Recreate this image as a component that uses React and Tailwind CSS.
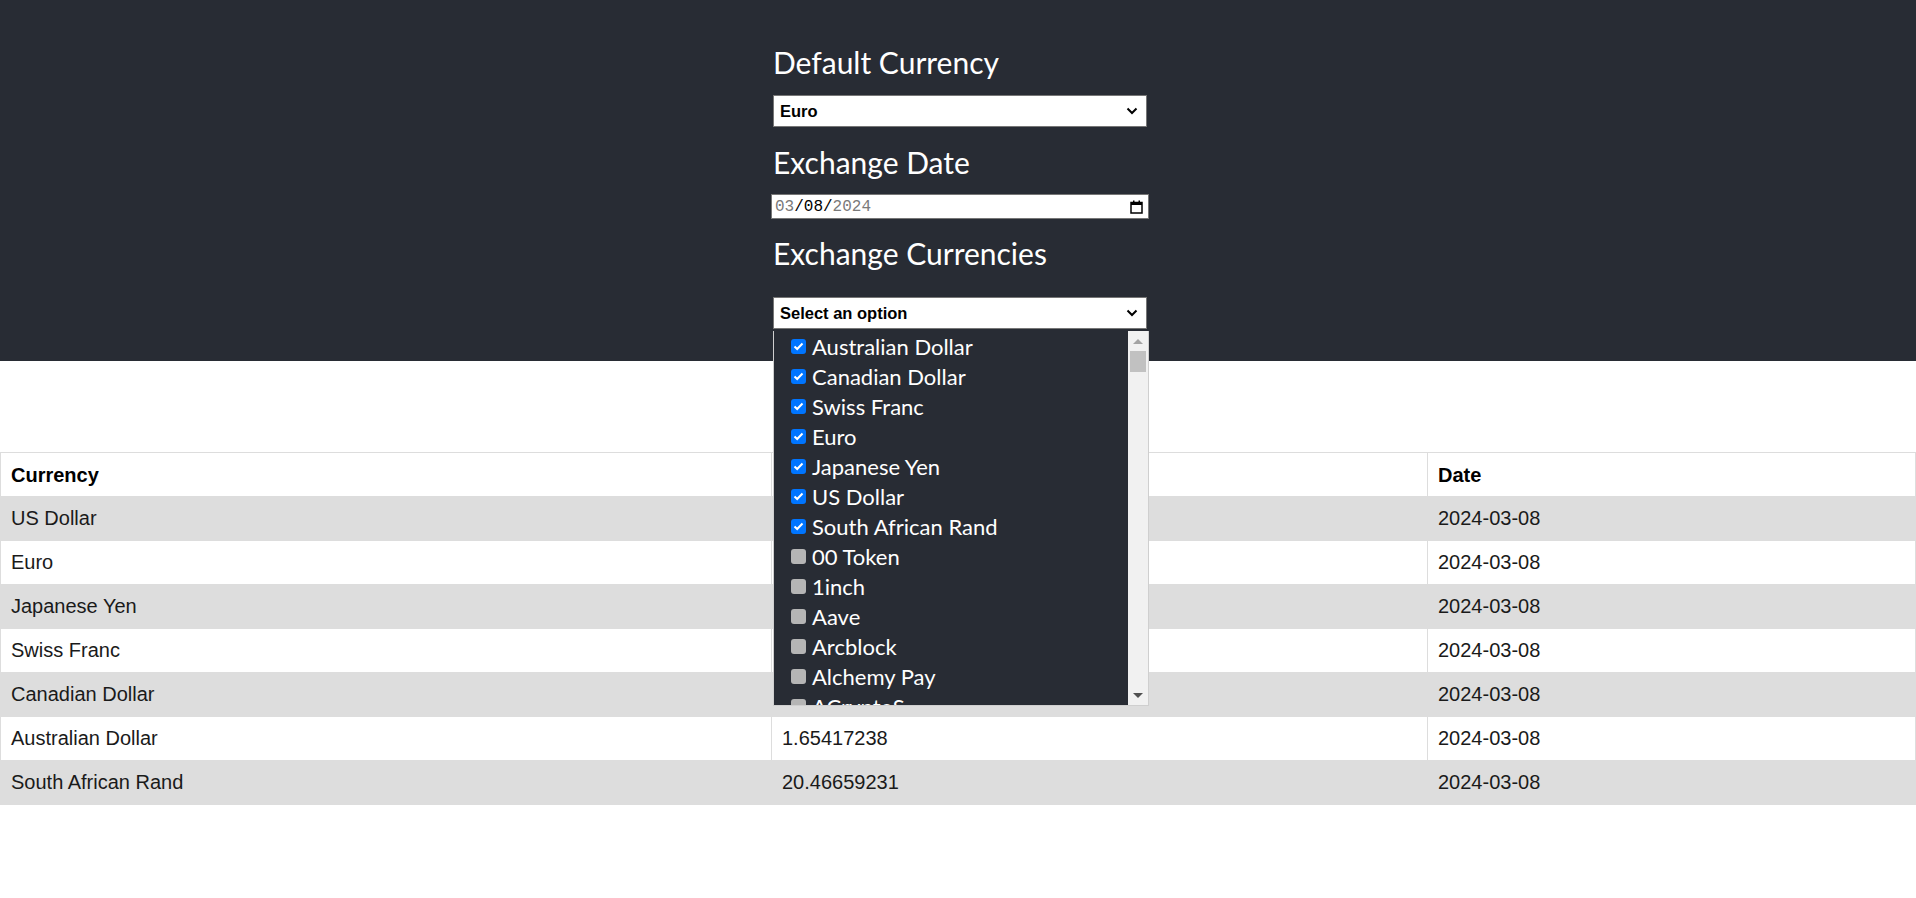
import React from "react";

// Currencies shown in the open multi-select list
const options = [
  { name: "Australian Dollar", checked: true },
  { name: "Canadian Dollar", checked: true },
  { name: "Swiss Franc", checked: true },
  { name: "Euro", checked: true },
  { name: "Japanese Yen", checked: true },
  { name: "US Dollar", checked: true },
  { name: "South African Rand", checked: true },
  { name: "00 Token", checked: false },
  { name: "1inch", checked: false },
  { name: "Aave", checked: false },
  { name: "Arcblock", checked: false },
  { name: "Alchemy Pay", checked: false },
  { name: "ACryptoS", checked: false },
  { name: "Adshares", checked: false },
];

// Rates against the default currency (Euro)
const rates = [
  { currency: "US Dollar", rate: "1.09425672", date: "2024-03-08" },
  { currency: "Euro", rate: "1", date: "2024-03-08" },
  { currency: "Japanese Yen", rate: "160.91783543", date: "2024-03-08" },
  { currency: "Swiss Franc", rate: "0.96066321", date: "2024-03-08" },
  { currency: "Canadian Dollar", rate: "1.47492105", date: "2024-03-08" },
  { currency: "Australian Dollar", rate: "1.65417238", date: "2024-03-08" },
  { currency: "South African Rand", rate: "20.46659231", date: "2024-03-08" },
];

const Chevron = () => (
  <svg width="12" height="8" viewBox="0 0 12 8" className="shrink-0">
    <path d="M1.5 1.5 L6 6 L10.5 1.5" fill="none" stroke="#000" strokeWidth="2" />
  </svg>
);

const CalendarIcon = () => (
  <svg width="13" height="14" viewBox="0 0 13 14" className="shrink-0">
    <rect x="1" y="2.5" width="11" height="10.5" fill="none" stroke="#000" strokeWidth="1.5" />
    <rect x="1" y="2.5" width="11" height="2.5" fill="#000" />
    <rect x="3" y="0.5" width="1.5" height="3" fill="#000" />
    <rect x="8.5" y="0.5" width="1.5" height="3" fill="#000" />
  </svg>
);

const Checkbox = ({ checked }) =>
  checked ? (
    <span className="w-[15px] h-[15px] rounded-[3px] bg-[#0075ff] flex items-center justify-center shrink-0">
      <svg width="11" height="9" viewBox="0 0 11 9">
        <path d="M1.5 4.5 L4.2 7 L9.5 1.5" fill="none" stroke="#fff" strokeWidth="2" />
      </svg>
    </span>
  ) : (
    <span className="w-[15px] h-[15px] rounded-[3px] bg-[#b5b5b5] shrink-0" />
  );

const Heading = ({ children, className = "" }) => (
  <h2 className={`ml-[2px] text-white text-[30px] leading-[36px] font-['Lato',sans-serif] ${className}`}>
    {children}
  </h2>
);

const App = () => {
  return (
    <div className="min-h-screen bg-white font-['Liberation_Sans',Arial,sans-serif]">
      {/* Settings header */}
      <header className="bg-[#282c34] h-[361px] flex justify-center pl-[4px] pt-[44px]">
        <div className="w-[378px] flex flex-col">
          <Heading>Default Currency</Heading>
          <div className="ml-[2px] mt-[15px] w-[374px] h-[32px] bg-white border border-[#767676] flex items-center justify-between pl-[6px] pr-[8px]">
            <span className="text-[16.5px] font-bold text-black">Euro</span>
            <Chevron />
          </div>

          <Heading className="mt-[17px]">Exchange Date</Heading>
          <div className="mt-[14px] w-[378px] h-[25px] bg-white border border-[#767676] flex items-center justify-between pl-[3px] pr-[5px]">
            <span className="font-['Liberation_Mono',monospace] text-[16px] leading-none">
              <span className="text-[#7a7a7a]">03</span>
              <span className="text-black">/08/</span>
              <span className="text-[#7a7a7a]">2024</span>
            </span>
            <CalendarIcon />
          </div>

          <Heading className="mt-[16px]">Exchange Currencies</Heading>
          <div className="relative mt-[26px]">
            <div className="ml-[2px] w-[374px] h-[32px] bg-white border border-[#767676] flex items-center justify-between pl-[6px] pr-[8px]">
              <span className="text-[16.5px] font-bold text-black">Select an option</span>
              <Chevron />
            </div>

            {/* Open option list */}
            <div className="absolute z-10 top-[34px] left-[2px] w-[376px] h-[375px] bg-[#282c34] border border-t-0 border-[#cfcfcf] flex">
              <ul className="flex-1 overflow-hidden">
                {options.map((o) => (
                  <li key={o.name} className="h-[30px] flex items-center gap-[6px] pl-[17px] text-white text-[22px] font-['Lato',sans-serif]">
                    <Checkbox checked={o.checked} />
                    <span>{o.name}</span>
                  </li>
                ))}
              </ul>
              {/* Scrollbar */}
              <div className="w-[20px] bg-[#f1f1f1] flex flex-col items-center">
                <div className="h-[20px] flex items-center justify-center">
                  <span className="w-0 h-0 border-l-[5px] border-r-[5px] border-b-[5px] border-l-transparent border-r-transparent border-b-[#a3a3a3]" />
                </div>
                <div className="w-[16px] h-[21px] bg-[#c1c1c1]" />
                <div className="flex-1" />
                <div className="h-[20px] flex items-center justify-center">
                  <span className="w-0 h-0 border-l-[5px] border-r-[5px] border-t-[5px] border-l-transparent border-r-transparent border-t-[#505050]" />
                </div>
              </div>
            </div>
          </div>
        </div>
      </header>

      {/* Rates table */}
      <table className="mt-[91px] w-full table-fixed border-collapse text-[20px] text-[#1a1a1a]">
        <colgroup>
          <col className="w-[771px]" />
          <col className="w-[656px]" />
          <col />
        </colgroup>
        <thead>
          <tr className="h-[44px] bg-white">
            <th className="border border-[#dddddd] px-[10px] text-left font-bold text-black">Currency</th>
            <th className="border border-[#dddddd] px-[10px] text-left font-bold text-black">Rate</th>
            <th className="border border-[#dddddd] px-[10px] text-left font-bold text-black">Date</th>
          </tr>
        </thead>
        <tbody>
          {rates.map((r, i) => (
            <tr key={r.currency} className={`h-[44px] ${i % 2 === 0 ? "bg-[#dddddd]" : "bg-white"}`}>
              <td className="border border-[#dddddd] px-[10px] pb-px">{r.currency}</td>
              <td className="border border-[#dddddd] px-[10px] pb-px">{r.rate}</td>
              <td className="border border-[#dddddd] px-[10px] pb-px">{r.date}</td>
            </tr>
          ))}
        </tbody>
      </table>
    </div>
  );
};

export default App;
